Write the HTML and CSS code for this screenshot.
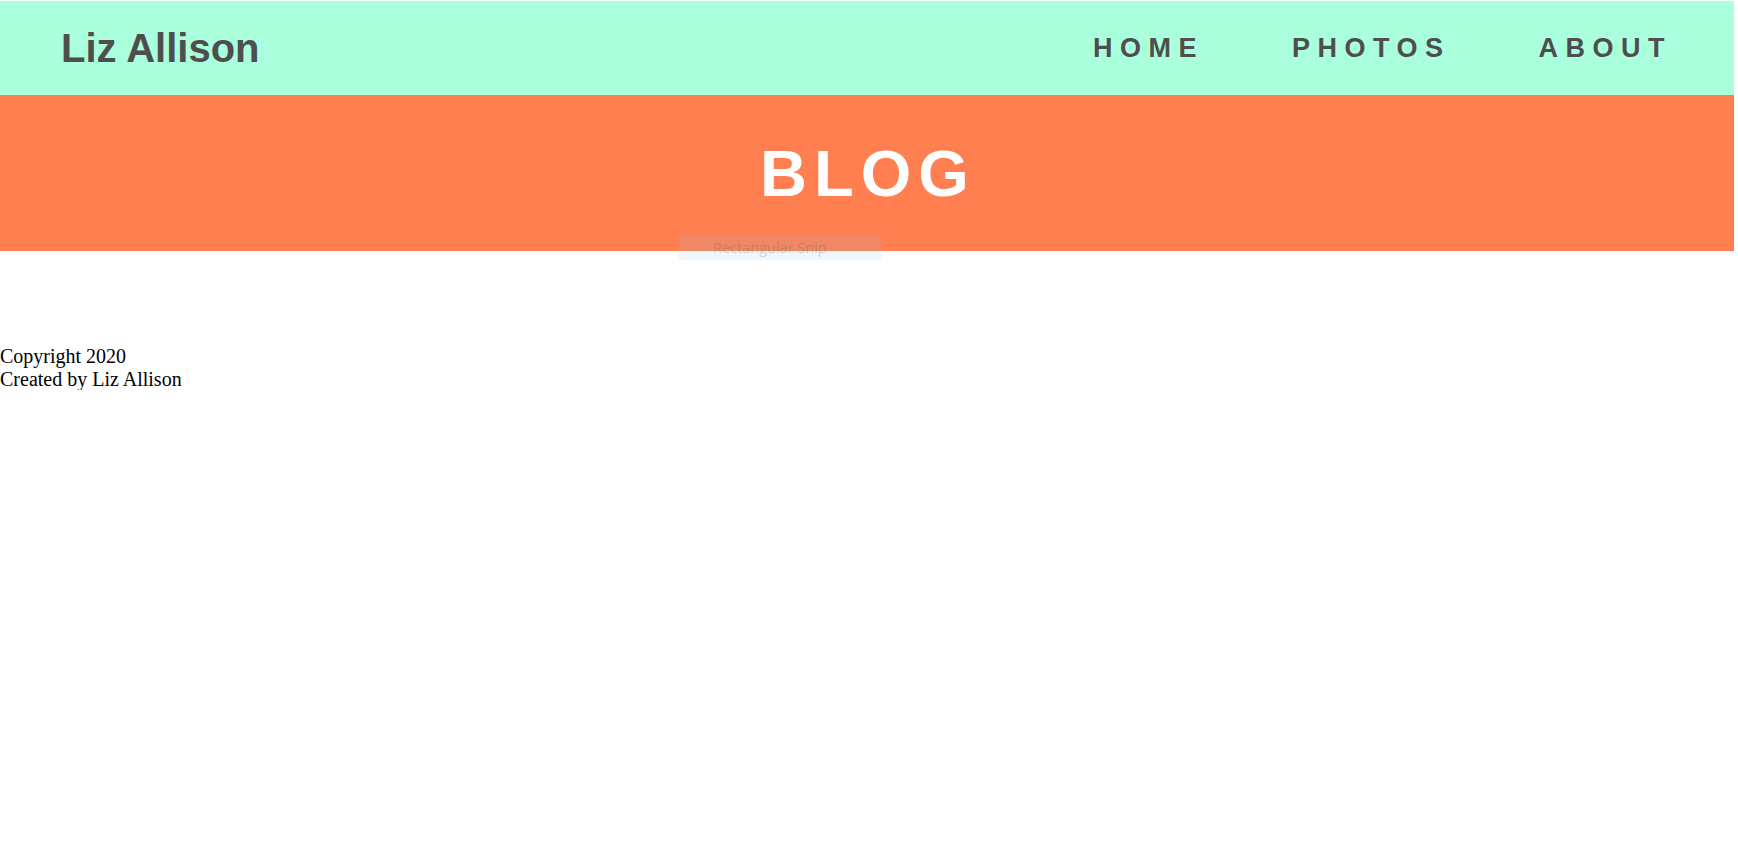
FILE: index.html
```html
<!DOCTYPE html>
<html lang="en">
<head>
<meta charset="utf-8">
<title>Liz Allison - Blog</title>
<link rel="stylesheet" href="styles.css">
</head>
<body>
<header class="site-header">
  <div class="logo">Liz Allison</div>
  <nav class="nav">
    <a class="nav-link" href="#">HOME</a>
    <a class="nav-link" href="#">PHOTOS</a>
    <a class="nav-link" href="#">ABOUT</a>
  </nav>
</header>
<section class="banner">
  <h1 class="banner-title">BLOG</h1>
  <div class="snip-tip">Rectangular Snip</div>
</section>
<main class="content"></main>
<footer class="footer">
  <div>Copyright 2020</div>
  <div>Created by Liz Allison</div>
</footer>
</body>
</html>
```
FILE: styles.css
```css
html, body {
  margin: 0;
  background: #ffffff;
}
body {
  padding: 1px 4px 0 0;
  font-family: "Liberation Serif", "Times New Roman", serif;
}
.site-header {
  height: 94px;
  background: #aaffdd;
  display: flex;
  align-items: center;
  justify-content: space-between;
  padding: 0 62px 0 61px;
  font-family: "Liberation Sans", Arial, sans-serif;
  color: #4e4e4e;
}
.logo {
  font-size: 40px;
  font-weight: bold;
}
.nav {
  display: flex;
  gap: 88px;
}
.nav-link {
  font-size: 27px;
  font-weight: bold;
  letter-spacing: 7.5px;
  color: #4e4e4e;
  text-decoration: none;
}
.banner {
  position: relative;
  height: 156px;
  background: #ff7f50;
  display: flex;
  align-items: center;
  justify-content: center;
}
.banner-title {
  margin: 0 0 0 2px;
  font-family: "Liberation Sans", Arial, sans-serif;
  font-size: 65px;
  font-weight: bold;
  letter-spacing: 7px;
  color: #ffffff;
}
.snip-tip {
  position: absolute;
  left: 679px;
  top: 141px;
  width: 202px;
  height: 24px;
  background: rgba(141, 190, 233, 0.14);
  color: rgba(110, 110, 110, 0.3);
  font-family: "Open Sans", "Noto Sans", sans-serif;
  font-size: 14.5px;
  line-height: 24px;
  text-align: left;
  box-sizing: border-box;
  padding-left: 34px;
}
.content {
  height: 94px;
}
.footer {
  font-size: 20px;
  line-height: 22.5px;
  color: #000000;
}
```
